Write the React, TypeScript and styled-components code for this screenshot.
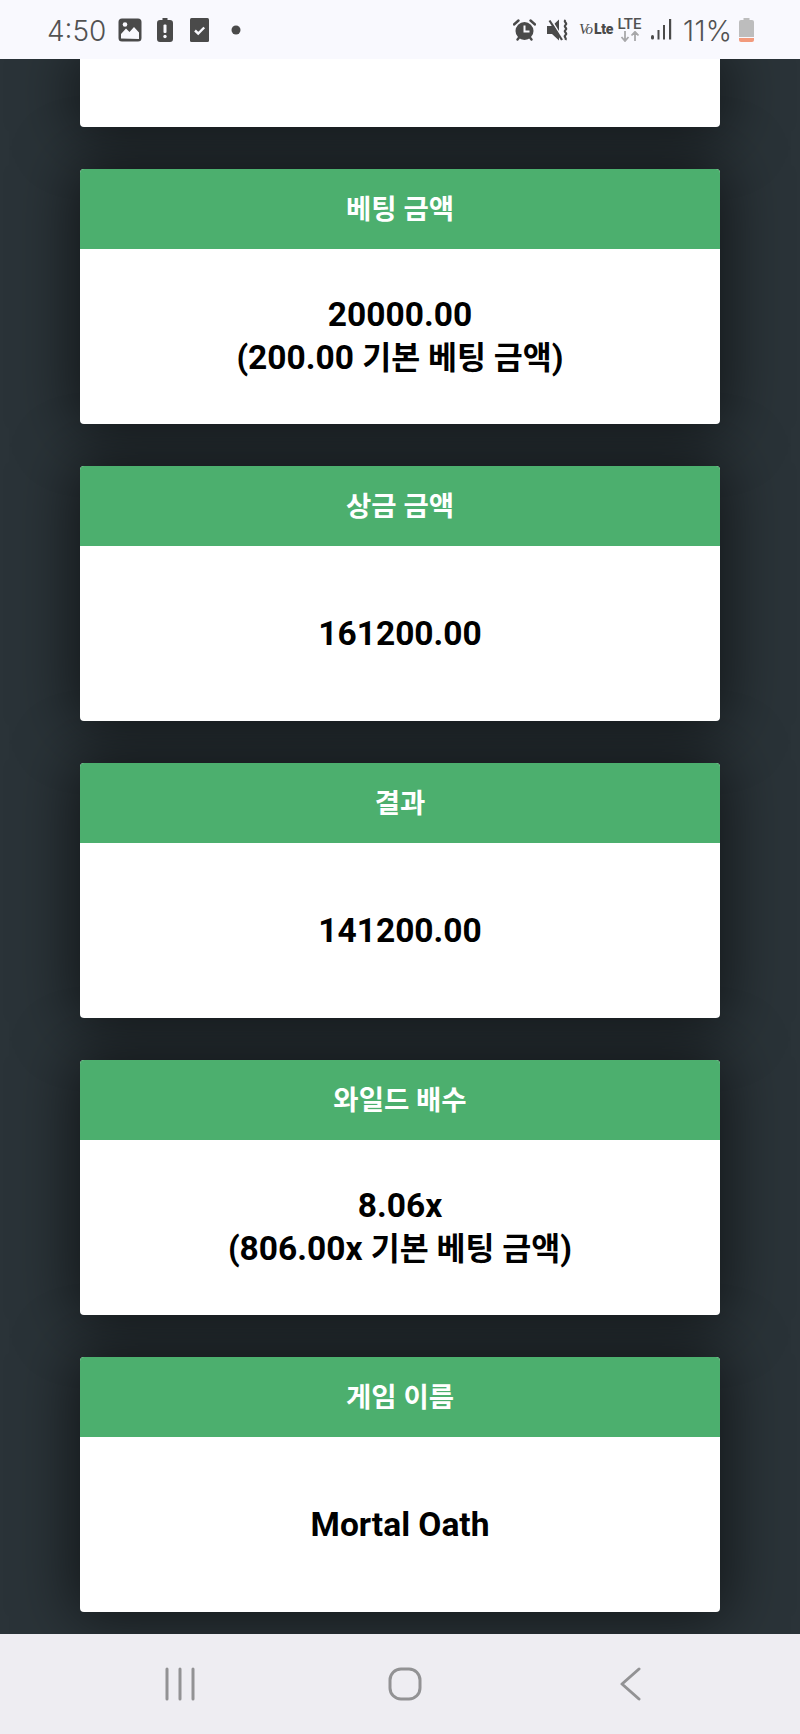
import React from "react";
import styled, { createGlobalStyle } from "styled-components";

const GlobalStyle = createGlobalStyle`
    html, body {
        margin: 0;
        padding: 0;
    }

    body {
        font-family: Roboto, "Noto Sans CJK KR", sans-serif;
    }
`;

const Screen = styled.div`
    display: flex;
    flex-direction: column;
    width: 800px;
    height: 1734px;
    overflow: hidden;
    background: #2a3338;
`;

const StatusBar = styled.header`
    display: flex;
    flex: none;
    align-items: center;
    justify-content: space-between;
    height: 59px;
    padding: 0 46px 0 47px;
    box-sizing: border-box;
    background: #f9f9fe;
    color: #525252;
    position: relative;
    z-index: 1;
`;

const StatusGroup = styled.div`
    display: flex;
    align-items: center;
    height: 100%;
`;

const Clock = styled.span`
    font-family: Inter, sans-serif;
    font-size: 28px;
    font-weight: 300;
    line-height: 1;
    width: 58px;
    white-space: nowrap;
    position: relative;
    top: 1px;
`;

const Glyph = styled.svg<{ $left?: number }>`
    display: block;
    flex: none;
    fill: #4a4a4a;
    margin-left: ${(props) => props.$left ?? 0}px;
`;

const VoLte = styled.span`
    display: flex;
    align-items: baseline;
    margin-left: 11px;
    width: 31px;
    color: #4a4a4a;
    white-space: nowrap;
    line-height: 1;
`;

const VoMark = styled.span`
    font-family: "Liberation Serif", serif;
    font-style: italic;
    font-size: 15px;
    letter-spacing: -1px;
    margin-right: 2px;
`;

const LteMark = styled.span`
    font-weight: 900;
    font-size: 14px;
    letter-spacing: -0.3px;
`;

const LteStack = styled.div`
    display: flex;
    flex-direction: column;
    align-items: center;
    width: 25px;
    margin-left: 7px;
`;

const LteLabel = styled.span`
    font-size: 15px;
    font-weight: 500;
    line-height: 13px;
    color: #525252;
`;

const Percent = styled.span`
    font-family: Inter, sans-serif;
    font-size: 28px;
    font-weight: 300;
    line-height: 1;
    width: 50px;
    margin-left: 11px;
    white-space: nowrap;
    letter-spacing: 0.4px;
    position: relative;
    top: 1px;
`;

const Content = styled.main`
    display: flex;
    flex: 1;
    flex-direction: column;
    gap: 42px;
    padding: 0 80px;
    overflow: hidden;
    isolation: isolate;
`;

const Card = styled.section`
    display: flex;
    flex: none;
    flex-direction: column;
    height: 255px;
    border-radius: 4px;
    background: #fff;
    position: relative;

    &::before {
        content: "";
        position: absolute;
        inset: 0;
        z-index: -1;
        border-radius: 4px;
        box-shadow: 0 0 60px 5px rgba(0, 0, 0, 0.6);
    }
`;

const ScrolledCard = styled(Card)`
    height: 68px;
    border-radius: 0 0 4px 4px;
`;

const CardHeader = styled.h2`
    display: flex;
    flex: none;
    align-items: center;
    justify-content: center;
    height: 80px;
    padding-bottom: 4px;
    box-sizing: border-box;
    margin: 0;
    border-radius: 4px 4px 0 0;
    background: #4caf6e;
    color: #fff;
    font-size: 27.5px;
    font-weight: 700;
`;

const CardBody = styled.div`
    display: flex;
    flex: 1;
    flex-direction: column;
    align-items: center;
    justify-content: center;
    color: #000;
    font-size: 33.5px;
    font-weight: 700;
    line-height: 43px;
`;

const Hangul = styled.span`
    font-size: 31.5px;
`;

const NavBar = styled.nav`
    display: flex;
    flex: none;
    align-items: center;
    justify-content: center;
    height: 100px;
    padding-left: 10px;
    background: #eeedf2;
    position: relative;
    z-index: 1;
`;

const NavSlot = styled.div`
    display: flex;
    justify-content: center;
    width: 225px;
`;

const NavIcon = styled.svg`
    display: block;
    fill: none;
    stroke: #929294;
    stroke-width: 3px;
    stroke-linecap: round;
    stroke-linejoin: round;
`;

const App: React.FC = () => (
    <Screen>
        <GlobalStyle />
        <StatusBar>
            <StatusGroup>
                <Clock>4:50</Clock>
                <Glyph $left={13} width="24" height="24" viewBox="0 0 24 24">
                    <path d="M4 0.5h16a3.5 3.5 0 0 1 3.5 3.5v16a3.5 3.5 0 0 1-3.5 3.5H4A3.5 3.5 0 0 1 0.5 20V4A3.5 3.5 0 0 1 4 0.5z" />
                    <path fill="#f9f9fe" d="M3 20.5v-4.5l5-5.5 3.5 3.5 4.5-5 5 5.5v6.500z" />
                    <circle fill="#f9f9fe" cx="7" cy="6.500" r="2.300" />
                </Glyph>
                <Glyph $left={15} width="16" height="24" viewBox="0 0 16 24">
                    <path d="M5.500 0h5v2H13a3 3 0 0 1 3 3v16a3 3 0 0 1-3 3H3a3 3 0 0 1-3-3V5a3 3 0 0 1 3-3h2.500z" />
                    <rect fill="#f9f9fe" x="6.500" y="6.500" width="3" height="8.500" rx="1" />
                    <circle fill="#f9f9fe" cx="8" cy="18.500" r="1.700" />
                </Glyph>
                <Glyph $left={17} width="19" height="24" viewBox="0 0 19 24">
                    <rect x="0" y="0" width="19" height="24" rx="1.500" />
                    <path d="M5 12.500l3.200 3 6-6" fill="none" stroke="#f9f9fe" strokeWidth="2.400" />
                </Glyph>
                <Glyph $left={22} width="10" height="10" viewBox="0 0 10 10">
                    <circle cx="5" cy="5" r="4.500" />
                </Glyph>
            </StatusGroup>
            <StatusGroup>
                <Glyph width="23" height="22" viewBox="0 0 23 22">
                    <circle cx="11.500" cy="12" r="9" />
                    <path d="M1 5.500L5.500 1.500M22 5.500L17.500 1.500M4.500 20.500l2-2.500M18.500 20.500l-2-2.500" stroke="#4a4a4a" strokeWidth="2.400" strokeLinecap="round" />
                    <path d="M11.500 6.500v6h5" fill="none" stroke="#f9f9fe" strokeWidth="2" />
                </Glyph>
                <Glyph $left={11} width="21" height="22" viewBox="0 0 21 22">
                    <path d="M0 7h5l7-6.500v21L5 15H0z" />
                    <path d="M4 0.500L16.500 21" stroke="#f9f9fe" strokeWidth="1.600" />
                    <path d="M2.500 1.500L15 21" stroke="#4a4a4a" strokeWidth="2.200" />
                    <path d="M18.500 1c-2.500 2 2.500 3 0 5s2.500 3 0 5 2.500 3 0 5 1.500 2.500 0 5" fill="none" stroke="#4a4a4a" strokeWidth="2.200" />
                </Glyph>
                <VoLte>
                    <VoMark>Vo</VoMark>
                    <LteMark>Lte</LteMark>
                </VoLte>
                <LteStack>
                    <LteLabel>LTE</LteLabel>
                    <Glyph width="20" height="11" viewBox="0 0 20 11">
                        <path d="M5 0v9.500M1.500 6L5 10l3.500-4M15 10V1M11.500 4.500L15 0.800l3.500 3.700" fill="none" stroke="#a8a8aa" strokeWidth="1.800" />
                    </Glyph>
                </LteStack>
                <Glyph $left={9} width="21" height="21" viewBox="0 0 21 21">
                    <rect x="0" y="16" width="3" height="4.500" rx="1.500" />
                    <rect x="6.500" y="11" width="2" height="9.500" />
                    <rect x="12" y="6" width="2" height="14.500" />
                    <rect x="18" y="0" width="2.200" height="20.500" />
                </Glyph>
                <Percent>11%</Percent>
                <Glyph $left={6} width="15" height="24" viewBox="0 0 15 24">
                    <path fill="#bdbdbd" d="M4.500 0h6v2H13a2 2 0 0 1 2 2v15H0V4a2 2 0 0 1 2-2h2.500z" />
                    <path fill="#f29a7c" d="M0 20h15v2a2 2 0 0 1-2 2H2a2 2 0 0 1-2-2z" />
                </Glyph>
            </StatusGroup>
        </StatusBar>
        <Content>
            <ScrolledCard />
            <Card>
                <CardHeader>베팅 금액</CardHeader>
                <CardBody>
                    <span>20000.00</span>
                    <span>(200.00 <Hangul>기본 베팅 금액</Hangul>)</span>
                </CardBody>
            </Card>
            <Card>
                <CardHeader>상금 금액</CardHeader>
                <CardBody>
                    <span>161200.00</span>
                </CardBody>
            </Card>
            <Card>
                <CardHeader>결과</CardHeader>
                <CardBody>
                    <span>141200.00</span>
                </CardBody>
            </Card>
            <Card>
                <CardHeader>와일드 배수</CardHeader>
                <CardBody>
                    <span>8.06x</span>
                    <span>(806.00x <Hangul>기본 베팅 금액</Hangul>)</span>
                </CardBody>
            </Card>
            <Card>
                <CardHeader>게임 이름</CardHeader>
                <CardBody>
                    <span>Mortal Oath</span>
                </CardBody>
            </Card>
        </Content>
        <NavBar>
            <NavSlot>
                <NavIcon width="30" height="34" viewBox="0 0 30 34">
                    <path d="M2 2v30M15 2v30M28 2v30" />
                </NavIcon>
            </NavSlot>
            <NavSlot>
                <NavIcon width="34" height="34" viewBox="0 0 34 34">
                    <rect x="2" y="2" width="30" height="30" rx="11" />
                </NavIcon>
            </NavSlot>
            <NavSlot>
                <NavIcon width="21" height="34" viewBox="0 0 21 34">
                    <path d="M19 2L2 17l17 15" />
                </NavIcon>
            </NavSlot>
        </NavBar>
    </Screen>
);

export default App;
